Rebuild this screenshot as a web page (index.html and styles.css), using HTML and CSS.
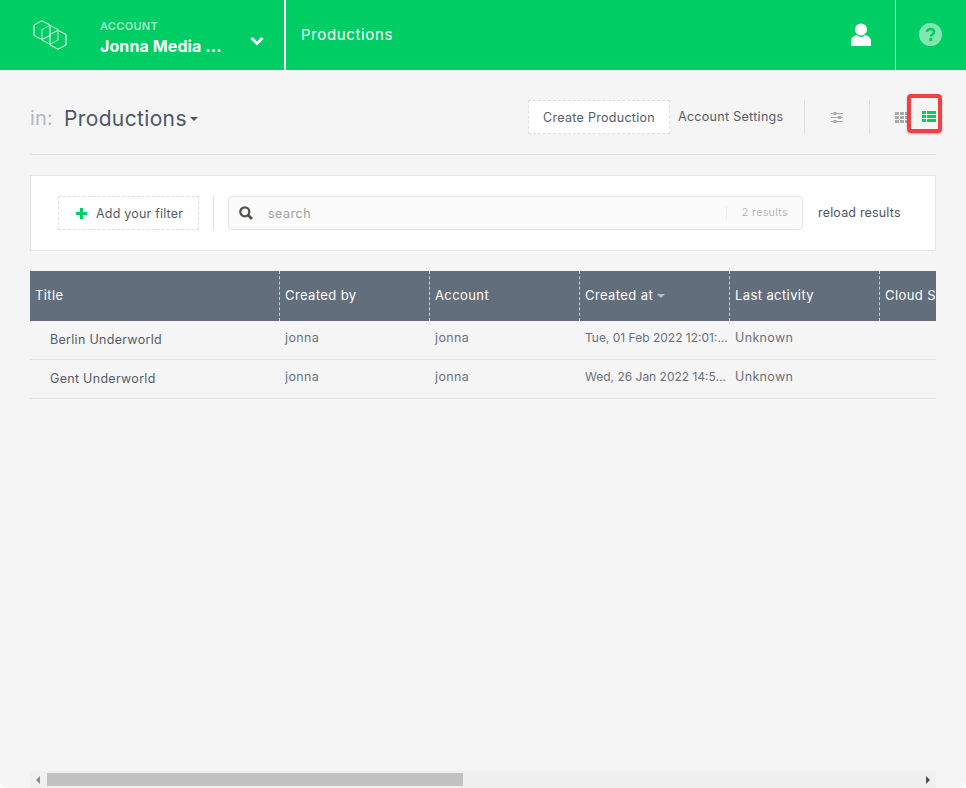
FILE: index.html
```html
<!DOCTYPE html>
<html lang="en">
<head>
<meta charset="utf-8">
<title>Productions</title>
<link rel="stylesheet" href="styles.css">
</head>
<body>
<div class="window">
  <header class="topbar">
    <div class="logo">
      <svg width="36" height="30" viewBox="0 0 36 30" fill="none" stroke="#fff" stroke-width="1">
        <path d="M2 5L10 .800L18 5V15.500L10 19.500L2 15.500Z"/>
        <path d="M10 9.500L18 5.300L26 9.500V20L18 24.200L10 20Z" opacity=".7"/>
        <path d="M18 14.500L26 10.300L34 14.500V25L26 29.200L18 25Z"/>
      </svg>
    </div>
    <div class="account">
      <div class="account-label">ACCOUNT</div>
      <div class="account-name">Jonna Media ...</div>
    </div>
    <div class="chevron">
      <svg width="14" height="10" viewBox="0 0 14 10" fill="none" stroke="#fff" stroke-width="3"><path d="M1.500 2L7 7.500L12.500 2"/></svg>
    </div>
    <div class="crumb">Productions</div>
    <div class="user">
      <svg width="20" height="24" viewBox="0 0 20 24" fill="#fff"><circle cx="10" cy="6.500" r="6"/><path d="M0 23V18C0 14.500 3 12.500 6 12C7 13.300 8.500 14 10 14C11.500 14 13 13.300 14 12C17 12.500 20 14.500 20 18V23Z"/></svg>
    </div>
    <div class="help">
      <svg width="23" height="23" viewBox="0 0 23 23"><circle cx="11.500" cy="11.500" r="11.500" fill="#80e7b0"/><path d="M8 9C8 6.800 9.500 6 11.500 6C13.500 6 15 7 15 9C15 11.500 12 11.200 12 13.500" fill="none" stroke="#00ce65" stroke-width="2.600"/><rect x="10.300" y="15" width="3" height="3" fill="#00ce65"/></svg>
    </div>
  </header>

  <main class="content">
    <div class="page-head">
      <div class="in-label">in:</div>
      <div class="page-title">Productions</div>
      <span class="caret"></span>
      <div class="head-actions">
        <button class="create-btn">Create Production</button>
        <div class="settings-link">Account Settings</div>
        <div class="tool tool-sliders">
          <svg width="12" height="11" viewBox="0 0 12 11" fill="#aaa"><rect y="1" width="12" height="1"/><rect y="5" width="12" height="1"/><rect y="9" width="12" height="1"/><rect x="2.500" width="3" height="3"/><rect x="7" y="4" width="3" height="3"/><rect x="2.500" y="8" width="3" height="3"/></svg>
        </div>
        <div class="tool tool-views">
          <svg width="14" height="11" viewBox="0 0 14 11" fill="#aaa"><rect width="4" height="3"/><rect x="5" width="4" height="3"/><rect x="10" width="4" height="3"/><rect y="4" width="4" height="3"/><rect x="5" y="4" width="4" height="3"/><rect x="10" y="4" width="4" height="3"/><rect y="8" width="4" height="3"/><rect x="5" y="8" width="4" height="3"/><rect x="10" y="8" width="4" height="3"/></svg>
          <div class="list-view">
            <svg width="14" height="11" viewBox="0 0 14 11" fill="#00ce65"><rect width="4" height="3"/><rect x="5" width="9" height="3"/><rect y="4" width="4" height="3"/><rect x="5" y="4" width="9" height="3"/><rect y="8" width="4" height="3"/><rect x="5" y="8" width="9" height="3"/></svg>
          </div>
        </div>
      </div>
    </div>

    <section class="filters">
      <button class="filter-btn"><span class="plus"></span>Add your filter</button>
      <div class="search">
        <svg class="search-icon" width="14" height="14" viewBox="0 0 14 14" fill="none" stroke="#55504a" stroke-width="2.200"><circle cx="5.800" cy="5.800" r="4.500"/><path d="M9 9L13 13" stroke-width="2.600"/></svg>
        <span class="search-text">search</span>
        <span class="results">2 results</span>
      </div>
      <div class="reload">reload results</div>
    </section>

    <div class="table">
      <div class="thead">
        <div class="th c-title">Title</div>
        <div class="th c-col">Created by</div>
        <div class="th c-col">Account</div>
        <div class="th c-col">Created at<span class="sort"></span></div>
        <div class="th c-col">Last activity</div>
        <div class="th c-col">Cloud Storage</div>
      </div>
      <div class="row">
        <div class="td c-title">Berlin Underworld</div>
        <div class="td c-col">jonna</div>
        <div class="td c-col">jonna</div>
        <div class="td c-col date">Tue, 01 Feb 2022 12:01:...</div>
        <div class="td c-col">Unknown</div>
      </div>
      <div class="row">
        <div class="td c-title">Gent Underworld</div>
        <div class="td c-col">jonna</div>
        <div class="td c-col">jonna</div>
        <div class="td c-col date">Wed, 26 Jan 2022 14:5...</div>
        <div class="td c-col">Unknown</div>
      </div>
    </div>
  </main>

  <div class="hscroll">
    <span class="arrow arrow-left"></span>
    <div class="track"><div class="thumb"></div></div>
    <span class="arrow arrow-right"></span>
  </div>
</div>
</body>
</html>
```
FILE: styles.css
```css
* { box-sizing: border-box; }
html, body { margin: 0; height: 100%; background: #fff; overflow: hidden; }
body { font-family: Inter, "Liberation Sans", sans-serif; color: #555d69; }
button { font: inherit; color: inherit; letter-spacing: inherit; }

.window {
  width: 966px; height: 788px; background: #f5f5f5;
  display: flex; flex-direction: column;
  border-radius: 0 0 7px 7px; overflow: hidden;
}

.topbar { height: 70px; background: #00ce65; color: #fff; display: flex; align-items: stretch; flex: none; }
.logo { width: 100px; padding: 20px 0 0 32px; }
.account { width: 139px; padding-top: 18px; }
.account-label { font-size: 11px; font-weight: 600; line-height: 14px; color: #a4ecc6; margin-top: 1px; letter-spacing: .3px; }
.account-name { font-size: 16px; font-weight: 700; line-height: 20px; margin-top: 3px; letter-spacing: .1px; }
.chevron { width: 47px; padding: 30px 0 0 11px; border-right: 2px solid #fff; }
.crumb { padding: 25px 0 0 15px; font-size: 15px; line-height: 20px; flex: 1; letter-spacing: .65px; }
.user { width: 77px; padding: 23px 0 0 32px; border-right: 1px solid #fff; }
.help { width: 70px; padding: 23px 0 0 23px; }

.content { flex: 1; padding: 30px 30px 0; min-height: 0; }

.page-head { display: flex; align-items: flex-start; height: 55px; border-bottom: 1px solid #e0e0e0; }
.in-label { font-size: 20px; line-height: 36px; color: #b4b8bd; width: 34px; letter-spacing: .2px; }
.page-title { font-size: 21px; line-height: 37px; color: #4e5663; letter-spacing: .36px; }
.caret { border: 4px solid transparent; border-top-color: #4e5663; border-bottom: 0; margin: 17px 0 0 3px; }
.head-actions { margin-left: auto; display: flex; align-items: center; height: 34px; }
.create-btn { width: 142px; height: 34px; background: #fff; border: 1px dashed #ddd; font-size: 12.500px; padding: 0; letter-spacing: .3px; }
.settings-link { width: 134px; padding: 0 0 1px 8px; font-size: 12.500px; white-space: nowrap; letter-spacing: .3px; }
.tool { height: 34px; display: flex; align-items: center; border-left: 1px solid #e0e0e0; }
.tool-sliders { width: 65px; padding-left: 26px; }
.tool-views { width: 67px; padding-left: 25px; position: relative; }
.list-view {
  position: absolute; left: 37px; top: -6px; width: 35px; height: 39px;
  border: 4px solid #ef4044; border-radius: 4px;
  box-shadow: 0 1px 2px rgba(0,0,0,.3);
  display: flex; align-items: flex-start; justify-content: flex-end;
  padding: 13px 2px 0 0;
}

.filters {
  margin-top: 20px; height: 76px; background: #fff; border: 1px solid #e6e6e6;
  display: flex; align-items: center; padding: 0 0 0 27px;
}
.filter-btn {
  width: 141px; height: 34px; background: #fff; border: 1px dashed #ddd; padding: 0 0 0 17px;
  font-size: 12.500px; display: flex; align-items: center; text-align: left; gap: 9px; position: relative; letter-spacing: .2px;
}
.plus {
  width: 11px; height: 11px; flex: none;
  background:
    linear-gradient(#00ce65, #00ce65) center / 11px 3px no-repeat,
    linear-gradient(#00ce65, #00ce65) center / 3px 11px no-repeat;
}
.search {
  margin-left: 29px; width: 575px; height: 34px; background: #fbfbfb; border: 1px solid #e6e6e6; border-radius: 4px;
  display: flex; align-items: center; position: relative; padding-left: 10px;
}
.filter-btn::after {
  content: ""; position: absolute; right: -16px; top: -1px; height: 34px; width: 1px; background: #e0e0e0;
}
.search-text { margin-left: 15px; font-size: 12.500px; color: #a0a0a0; letter-spacing: .5px; }
.results {
  margin-left: auto; margin-right: 14px; padding-left: 15px; font-size: 10.500px; color: #b5b5b5;
  border-left: 1px solid #eee; line-height: 14px; letter-spacing: .4px;
}
.reload { margin-left: 15px; font-size: 12.500px; padding-bottom: 2px; color: #4e5663; white-space: nowrap; letter-spacing: .18px; }

.table { margin-top: 20px; }
.thead { display: flex; height: 50px; background: #626e7c; color: #fff; overflow: hidden; }
.th { height: 50px; display: flex; align-items: center; font-size: 13px; padding: 0 0 2px 5px; white-space: nowrap; flex: none; letter-spacing: .4px; }
.c-title { width: 249px; }
.c-col { width: 150px; }
.th.c-col { border-left: 1px dashed #c9ced3; padding-left: 5px; }
.sort { border: 4px solid transparent; border-top-color: #b9bfc6; border-bottom: 0; margin: 2px 0 0 4px; }

.row { display: flex; height: 39px; border-bottom: 1px solid #e3e3e3; font-size: 12.500px; }
.td { flex: none; padding: 9px 0 0 6px; line-height: 16px; white-space: nowrap; overflow: hidden; color: #6b717a; letter-spacing: .35px; }
.td.c-title { padding: 11px 0 0 20px; color: #555d69; letter-spacing: .3px; }
.td.date { font-size: 12px; letter-spacing: 0; }

.hscroll { height: 17px; margin: 0 30px; display: flex; align-items: center; background: #f0f0f0; flex: none; }
.track { flex: 1; height: 13px; }
.thumb { width: 416px; height: 100%; background: #c1c1c1; }
.arrow { width: 0; height: 0; border: 4px solid transparent; flex: none; }
.arrow-left { border-left: 0; border-right-color: #8a8a8a; margin: 0 7px 0 6px; }
.arrow-right { border-right: 0; border-left-color: #505050; margin: 0 6px; }
```
